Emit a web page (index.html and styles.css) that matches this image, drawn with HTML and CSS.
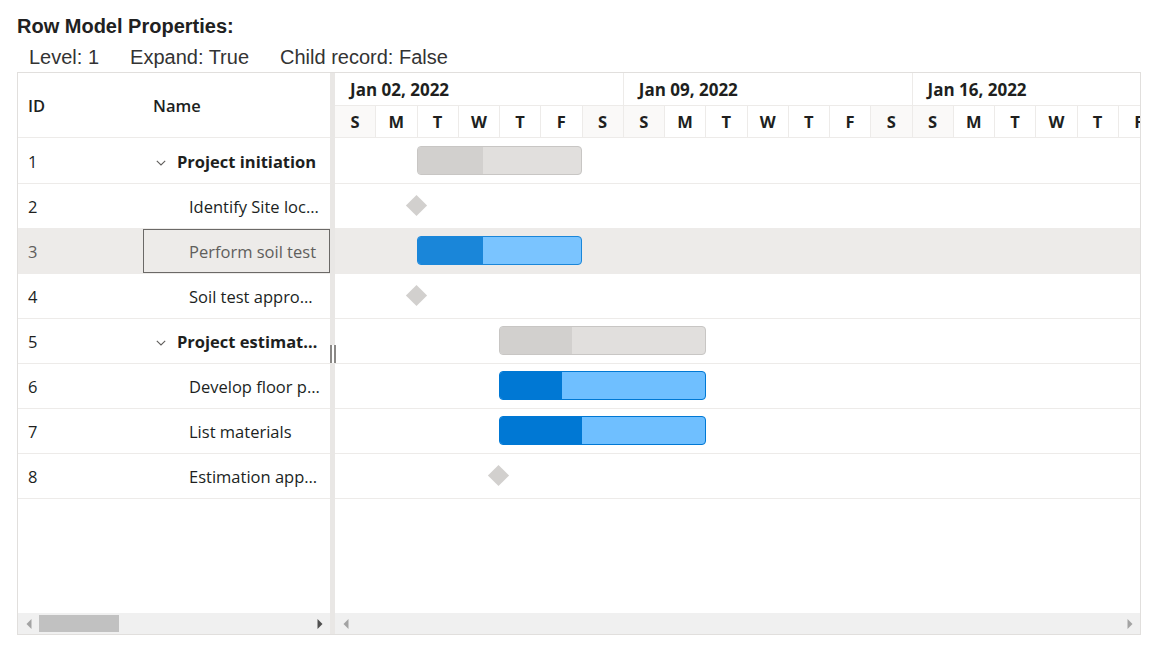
FILE: index.html
```html
<!DOCTYPE html>
<html lang="en">
<head>
<meta charset="utf-8">
<title>Row Model Properties</title>
<link rel="stylesheet" href="styles.css">
</head>
<body>
<div class="page">
  <div class="title">Row Model Properties:</div>
  <div class="props"><span>Level: 1</span><span>Expand: True</span><span>Child record: False</span></div>

  <div class="gantt">
    <div class="grid-pane">
      <div class="grid-header">
        <div class="col-id">ID</div>
        <div class="col-name">Name</div>
      </div>
      <div class="grid-body">
        <div class="grow">
          <div class="cell-id">1</div>
          <div class="cell-name parent"><span class="chev"><svg width="10" height="6" viewBox="0 0 10 6"><path d="M0.8 0.8 L5 5 L9.2 0.8" fill="none" stroke="#605e5c" stroke-width="1.1"/></svg></span><span class="name-text">Project initiation</span></div>
        </div>
        <div class="grow">
          <div class="cell-id">2</div>
          <div class="cell-name child"><span class="name-text">Identify Site location</span></div>
        </div>
        <div class="grow selected">
          <div class="cell-id">3</div>
          <div class="cell-name child focused"><span class="name-text">Perform soil test</span></div>
        </div>
        <div class="grow">
          <div class="cell-id">4</div>
          <div class="cell-name child"><span class="name-text">Soil test approval</span></div>
        </div>
        <div class="grow">
          <div class="cell-id">5</div>
          <div class="cell-name parent"><span class="chev"><svg width="10" height="6" viewBox="0 0 10 6"><path d="M0.8 0.8 L5 5 L9.2 0.8" fill="none" stroke="#605e5c" stroke-width="1.1"/></svg></span><span class="name-text">Project estimation</span></div>
        </div>
        <div class="grow">
          <div class="cell-id">6</div>
          <div class="cell-name child"><span class="name-text">Develop floor plan for estimation</span></div>
        </div>
        <div class="grow">
          <div class="cell-id">7</div>
          <div class="cell-name child"><span class="name-text">List materials</span></div>
        </div>
        <div class="grow">
          <div class="cell-id">8</div>
          <div class="cell-name child"><span class="name-text">Estimation approval</span></div>
        </div>
      </div>
      <div class="hscroll">
        <div class="sbtn"><svg width="6" height="10" viewBox="0 0 6 10"><polygon points="5.5,0 5.5,10 0.5,5" fill="#a3a3a3"/></svg></div>
        <div class="track"><div class="thumb"></div></div>
        <div class="sbtn"><svg width="6" height="10" viewBox="0 0 6 10"><polygon points="0.5,0 0.5,10 5.5,5" fill="#505050"/></svg></div>
      </div>
    </div>

    <div class="splitter"><div class="handle"><span></span><span></span></div></div>

    <div class="chart-pane">
      <div class="timeline">
        <div class="tier-top">
          <div class="week">Jan 02, 2022</div>
          <div class="week">Jan 09, 2022</div>
          <div class="week">Jan 16, 2022</div>
        </div>
        <div class="tier-bottom">
          <div class="day we">S</div><div class="day">M</div><div class="day">T</div><div class="day">W</div><div class="day">T</div><div class="day">F</div><div class="day we">S</div>
          <div class="day we">S</div><div class="day">M</div><div class="day">T</div><div class="day">W</div><div class="day">T</div><div class="day">F</div><div class="day we">S</div>
          <div class="day we">S</div><div class="day">M</div><div class="day">T</div><div class="day">W</div><div class="day">T</div><div class="day">F</div><div class="day we">S</div>
        </div>
      </div>
      <div class="chart-body">
        <div class="crow">
          <div class="bar parent-bar" style="left:82px;width:165px"><div class="prog" style="width:40%"></div></div>
        </div>
        <div class="crow">
          <div class="milestone" style="left:74px"></div>
        </div>
        <div class="crow selected">
          <div class="bar task-bar sel" style="left:82px;width:165px"><div class="prog" style="width:40%"></div></div>
        </div>
        <div class="crow">
          <div class="milestone" style="left:74px"></div>
        </div>
        <div class="crow">
          <div class="bar parent-bar" style="left:164px;width:207px"><div class="prog" style="width:35%"></div></div>
        </div>
        <div class="crow">
          <div class="bar task-bar" style="left:164px;width:207px"><div class="prog" style="width:30%"></div></div>
        </div>
        <div class="crow">
          <div class="bar task-bar" style="left:164px;width:207px"><div class="prog" style="width:40%"></div></div>
        </div>
        <div class="crow">
          <div class="milestone" style="left:156px"></div>
        </div>
      </div>
      <div class="hscroll">
        <div class="sbtn"><svg width="6" height="10" viewBox="0 0 6 10"><polygon points="5.5,0 5.5,10 0.5,5" fill="#a3a3a3"/></svg></div>
        <div class="track"></div>
        <div class="sbtn"><svg width="6" height="10" viewBox="0 0 6 10"><polygon points="0.5,0 0.5,10 5.5,5" fill="#a3a3a3"/></svg></div>
      </div>
    </div>
  </div>
</div>
</body>
</html>
```

FILE: styles.css
```css
* { box-sizing: border-box; }

body {
  margin: 0;
  background: #fff;
  font-family: "Liberation Sans", Arial, sans-serif;
  color: #212121;
}

.page {
  padding: 0 17px;
}

.title {
  font-size: 20px;
  font-weight: 700;
  line-height: 23px;
  padding-top: 15px;
}

.props {
  display: flex;
  gap: 31px;
  padding-left: 12px;
  margin-top: 8px;
  font-size: 20px;
  line-height: 23px;
  color: #333;
}

.gantt {
  display: flex;
  width: 1124px;
  height: 563px;
  margin-top: 3px;
  border: 1px solid #e1dfdd;
  font-family: "Open Sans", "Noto Sans", sans-serif;
  color: #201f1e;
}

/* ---------- grid ---------- */
.grid-pane {
  width: 312px;
  flex-shrink: 0;
  display: flex;
  flex-direction: column;
}

.grid-header {
  height: 65px;
  flex-shrink: 0;
  display: flex;
  align-items: center;
  border-bottom: 1px solid #edebe9;
  font-size: 16.5px;
  font-weight: 600;
}

.col-id { width: 125px; padding-left: 10px; }
.col-name { width: 187px; padding-left: 10px; }

.grid-body {
  flex: 1;
  overflow: hidden;
  padding-top: 1px;
}

.grow {
  height: 45px;
  display: flex;
  border-bottom: 1px solid #edebe9;
  font-size: 16.5px;
}

.grow.selected {
  background: #edebe9;
  color: #605e5c;
}

.cell-id {
  width: 125px;
  padding-left: 10px;
  padding-top: 1px;
  display: flex;
  align-items: center;
}

.cell-name {
  width: 187px;
  padding: 1px 10px 0;
  display: flex;
  align-items: center;
  overflow: hidden;
}

.cell-name.focused {
  border: 1px solid #6b6967;
  padding: 0 9px;
}

.cell-name.child { padding-left: 46px; }
.cell-name.focused.child { padding-left: 45px; }

.cell-name.parent { font-weight: 700; }

.chev {
  width: 16px;
  flex-shrink: 0;
  display: flex;
  justify-content: center;
  align-items: center;
  margin-right: 8px;
  margin-top: 3px;
}

.name-text {
  flex: 1;
  min-width: 0;
  white-space: nowrap;
  overflow: hidden;
  text-overflow: ellipsis;
}

/* ---------- splitter ---------- */
.splitter {
  width: 5px;
  flex-shrink: 0;
  background: #e9e7e5;
  display: flex;
  align-items: center;
  justify-content: center;
}

.handle {
  position: relative;
  z-index: 2;
  flex-shrink: 0;
  width: 8px;
  height: 18px;
  background: #fff;
  display: flex;
  justify-content: center;
  gap: 2px;
}

.handle span {
  width: 2px;
  height: 100%;
  background: #8a8886;
}

/* ---------- chart ---------- */
.chart-pane {
  flex: 1;
  min-width: 0;
  display: flex;
  flex-direction: column;
  overflow: hidden;
}

.timeline {
  height: 65px;
  flex-shrink: 0;
  border-bottom: 1px solid #edebe9;
  overflow: hidden;
}

.tier-top {
  height: 33px;
  display: flex;
  border-bottom: 1px solid #edebe9;
}

.week {
  width: 288.75px;
  flex-shrink: 0;
  border-right: 1px solid #edebe9;
  padding-left: 15px;
  display: flex;
  align-items: center;
  font-size: 17px;
  font-weight: 700;
  padding-top: 1px;
}

.tier-bottom {
  height: 31px;
  display: flex;
}

.day {
  width: 41.25px;
  flex-shrink: 0;
  border-right: 1px solid #edebe9;
  display: flex;
  align-items: center;
  justify-content: center;
  font-size: 16.5px;
  font-weight: 700;
}

.day.we { background: #faf9f8; }

.chart-body {
  flex: 1;
  overflow: hidden;
  padding-top: 1px;
}

.crow {
  position: relative;
  height: 45px;
  border-bottom: 1px solid #edebe9;
}

.crow.selected { background: #edebe9; }

.bar {
  position: absolute;
  top: 7px;
  height: 29px;
  border-radius: 4px;
  overflow: hidden;
  border: 1px solid;
}

.bar .prog {
  height: 100%;
}

.parent-bar {
  background: #e1dfdd;
  border-color: #c8c6c4;
}
.parent-bar .prog { background: #d2d0ce; }

.task-bar {
  background: #6fbfff;
  border-color: #0078d4;
}
.task-bar .prog { background: #0078d4; }

.task-bar.sel {
  background: #7ac4ff;
  border-color: #1a86d9;
}
.task-bar.sel .prog { background: #1a86d9; }

.milestone {
  position: absolute;
  top: 14px;
  width: 15px;
  height: 15px;
  background: #d2d0ce;
  transform: rotate(45deg);
}

/* ---------- scrollbars ---------- */
.hscroll {
  height: 21px;
  flex-shrink: 0;
  background: #f0f0f0;
  display: flex;
}

.sbtn {
  width: 21px;
  flex-shrink: 0;
  display: flex;
  align-items: center;
  justify-content: center;
}

.track {
  flex: 1;
  display: flex;
  align-items: center;
}

.thumb {
  width: 80px;
  height: 17px;
  background: #c1c1c1;
}
```
